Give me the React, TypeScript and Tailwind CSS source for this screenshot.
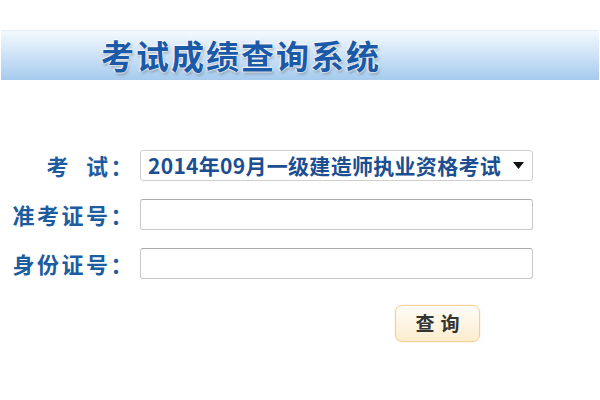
import React, { useState } from 'react';

const font = "font-['Microsoft_YaHei','Noto_Sans_CJK_SC',sans-serif]";

const App: React.FC = () => {
  const [exam, setExam] = useState('2014年09月一级建造师执业资格考试');
  const [ticket, setTicket] = useState('');
  const [idCard, setIdCard] = useState('');

  return (
    <div className={`w-[600px] h-[400px] bg-white ${font}`}>
      {/* Banner */}
      <div className="pt-[30px]">
        <div className="h-[50px] mx-[1px] bg-gradient-to-b from-[#f4f9fe] to-[#a6cbee] border-t border-[#e4eef8] flex items-center pl-[100px]">
          <h1 className="text-[33px] leading-none font-bold tracking-[2px] text-[#1a5aa8] [text-shadow:0_0_2px_#fff,0_0_2px_#fff,0_0_3px_#fff,1px_2px_3px_rgba(0,0,0,0.35)]">
            考试成绩查询系统
          </h1>
        </div>
      </div>

      {/* Form */}
      <div className="mt-[70px] flex flex-col gap-[18px]">
        <div className="flex items-center h-[31px]">
          <label className="w-[135px] text-right text-[22px] leading-[31px] font-bold text-[#1d5c9f] tracking-[2.5px]">
            考&nbsp;&nbsp;试：
          </label>
          <div className="ml-[5px] w-[393px] h-[31px] border border-[#cfcfcf] rounded-[3px] bg-white flex items-center justify-between pl-[7px] pr-[8px]">
            <span className="text-[21px] font-bold text-[#1b4f92] leading-none tracking-[0.3px]">{exam}</span>
            <svg width="11" height="7" viewBox="0 0 11 7">
              <path d="M0 0 L11 0 L5.5 7 Z" fill="#111" />
            </svg>
          </div>
        </div>

        <div className="flex items-center h-[31px]">
          <label className="w-[135px] text-right text-[22px] leading-[31px] font-bold text-[#1d5c9f] tracking-[2.5px]">
            准考证号：
          </label>
          <input
            value={ticket}
            onChange={(e) => setTicket(e.target.value)}
            className="ml-[5px] w-[393px] h-[31px] border border-[#c8c8c8] border-t-[#a9a9a9] rounded-[3px] bg-white outline-none px-2"
          />
        </div>

        <div className="flex items-center h-[31px]">
          <label className="w-[135px] text-right text-[22px] leading-[31px] font-bold text-[#1d5c9f] tracking-[2.5px]">
            身份证号：
          </label>
          <input
            value={idCard}
            onChange={(e) => setIdCard(e.target.value)}
            className="ml-[5px] w-[393px] h-[31px] border border-[#c8c8c8] border-t-[#a9a9a9] rounded-[3px] bg-white outline-none px-2"
          />
        </div>
      </div>

      <div className="mt-[26px] pl-[395px]">
        <button
          onClick={() => setExam(exam)}
          className="w-[85px] h-[37px] rounded-[7px] border border-[#f3cf98] bg-gradient-to-b from-[#fffdf8] to-[#fbeccd] text-[19px] font-bold text-[#333] tracking-[6px] pl-[6px] shadow-[0_0_2px_#fbe3bb]"
        >
          查询
        </button>
      </div>
    </div>
  );
};

export default App;
